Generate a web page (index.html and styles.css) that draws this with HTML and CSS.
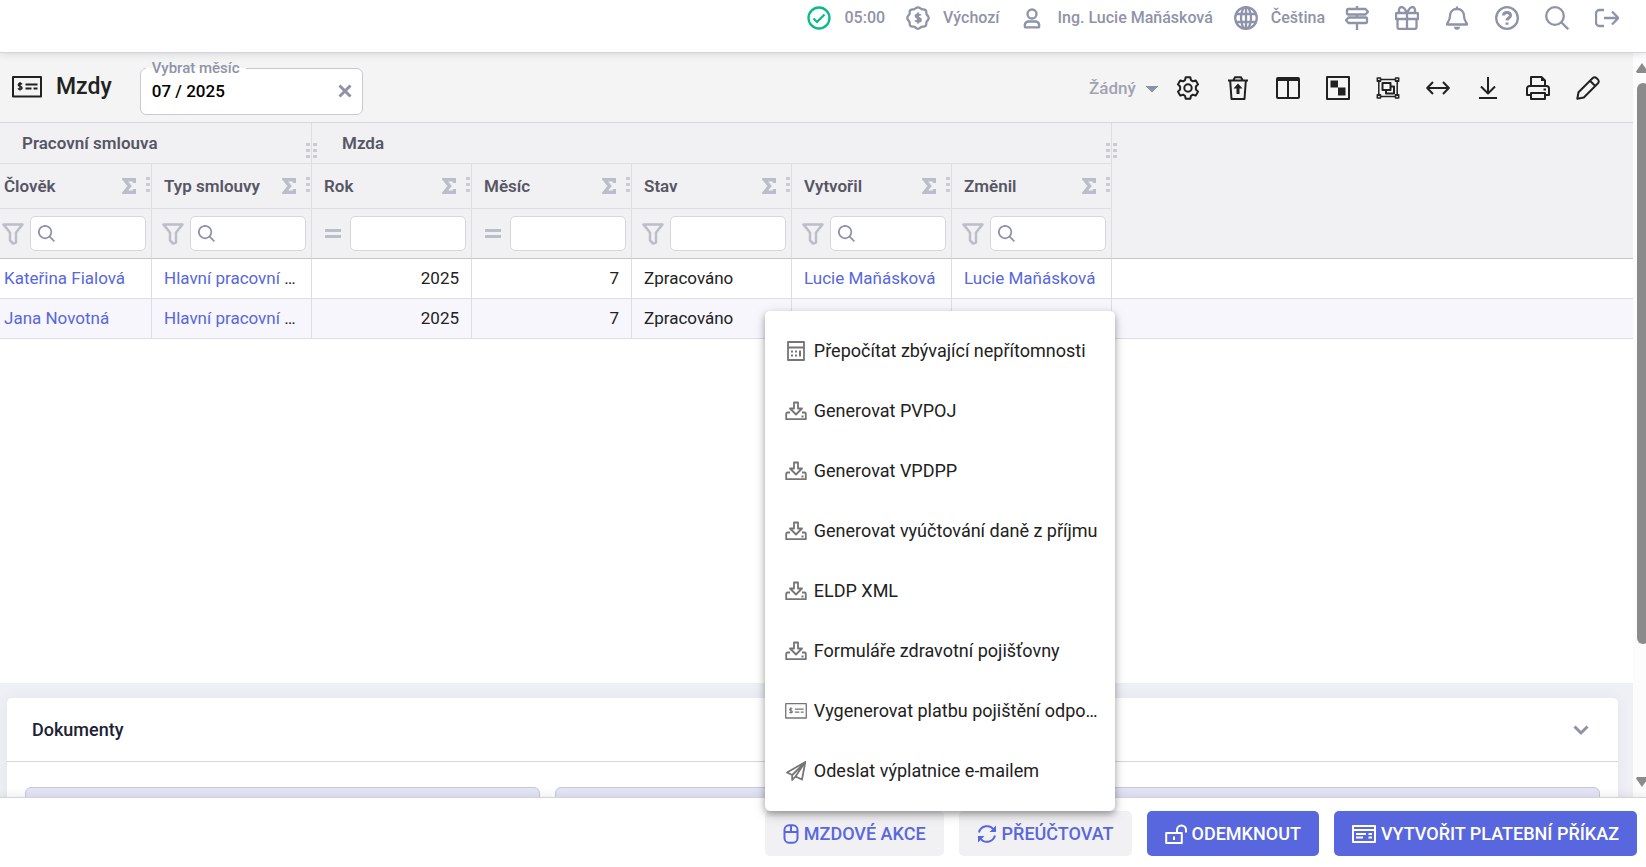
FILE: index.html
```html
<!DOCTYPE html>
<html lang="cs">
<head>
    <meta charset="UTF-8">
    <meta name="viewport" content="width=device-width, initial-scale=1.0">
    <title>Mzdy</title>
    <link rel="stylesheet" href="styles.css">
</head>
<body>

    <!-- Ikony -->
    <svg class="sprite" aria-hidden="true">
        <symbol id="i-check" viewBox="0 0 24 24"><circle cx="12" cy="12" r="10.5"/><path d="M6.5 12.5l3.5 3.5 7.500-7.500"/></symbol>
        <symbol id="i-badge" viewBox="0 0 24 24"><path d="M12 1.300c1.800 0 2.500 1.500 3.600 1.900s2.800-.3 4 .9.500 2.900.9 4 2.200 2 2.200 3.900-1.700 2.700-2.200 3.900.3 2.800-.9 4-2.900.5-4 .9-2 2-3.600 2-2.500-1.500-3.600-2-2.800.3-4-.9-.5-2.900-.9-4-2.200-2-2.200-3.900 1.700-2.700 2.200-3.900-.3-2.800.9-4 2.900-.5 4-.9 1.900-1.900 3.600-1.900z"/><path d="M14.500 9.500c-.3-1.200-4.800-1.500-4.800.6 0 2.200 5 1.500 5 3.800 0 2-4.700 2-5.200.3M12 6.500v11"/></symbol>
        <symbol id="i-user" viewBox="0 0 24 24"><circle cx="12" cy="8" r="4.500"/><path d="M4.800 20.500v-1.500a4 4 0 0 1 4-3.500h6.400a4 4 0 0 1 4 3.500v1.500a.8.8 0 0 1-.8.800H5.600a.8.800 0 0 1-.8-.8z"/></symbol>
        <symbol id="i-globe" viewBox="0 0 24 24"><circle cx="12" cy="12" r="10.800"/><ellipse cx="12" cy="12" rx="5" ry="10.800"/><path d="M12 1v22M2.500 8h19M2.500 16h19"/></symbol>
        <symbol id="i-sign" viewBox="0 0 24 24"><path d="M12 0v3M12 8.500v3M12 17v7M3 3h17.500l2.500 2.700-2.500 2.800H3a1 1 0 0 1-1-1V4a1 1 0 0 1 1-1zM21 11.500H3.500L1 14.200 3.500 17H21a1 1 0 0 0 1-1v-3.500a1 1 0 0 0-1-1z"/></symbol>
        <symbol id="i-gift" viewBox="0 0 24 24"><path d="M2 7h20a1 1 0 0 1 1 1v5H1V8a1 1 0 0 1 1-1zM2.500 13v8a2 2 0 0 0 2 2h15a2 2 0 0 0 2-2v-8M12 7v16M12 7C10 2.500 8.500 1 6.500 1S3.200 4 4.500 7M12 7c2-4.500 3.500-6 5.500-6s3.300 3 2 6"/></symbol>
        <symbol id="i-bell" viewBox="0 0 24 24"><path d="M12 3c-4.500 0-7 3-7 7 0 5-3 6-3 8.500h20c0-2.500-3-3.500-3-8.500 0-4-2.500-7-7-7zM12 .500v2"/><path class="solid" d="M9 20.800h6a3 3 0 0 1-6 0z"/></symbol>
        <symbol id="i-help" viewBox="0 0 24 24"><circle cx="12" cy="12" r="10.800"/><path class="thick" d="M8.500 9.500c.2-4 7-4 7 0 0 2.500-3.500 2.300-3.500 5M12 16.500v2.300"/></symbol>
        <symbol id="i-search" viewBox="0 0 24 24"><circle cx="10" cy="10" r="8.800"/><path d="M16.500 16.500l6.700 6.700"/></symbol>
        <symbol id="i-logout" viewBox="0 0 24 24"><path d="M9 4H4.500A3.500 3.500 0 0 0 1 7.500v9A3.500 3.500 0 0 0 4.500 20H9M9 12h14M17 5.500l6.300 6.500-6.300 6.500"/></symbol>
        <symbol id="i-check-card" viewBox="0 0 30 22"><path d="M1 1h28v19.500H1z"/><path class="thin" d="M10 8.300c-.6-1-3.700-1.200-3.700.6s3.700 1 3.700 3c0 1.800-3.300 1.900-3.900.4M8 6v8.500"/><path class="bar" d="M13.500 8.500h12M13.500 12.500h6M21.500 12.500h4"/></symbol>
        <symbol id="i-gear" viewBox="0 0 24 24"><path d="M9.700 1.200h4.600l.7 3 1.800 1.100 3-.9 2.300 4-2.200 2.100v3l2.200 2.100-2.300 4-3-.9-1.800 1.100-.7 3H9.700l-.7-3-1.800-1.100-3 .9-2.300-4 2.200-2.100v-3L1.900 8.400l2.300-4 3 .9L9 4.200z"/><circle cx="12" cy="12" r="3.700"/></symbol>
        <symbol id="i-trash" viewBox="0 0 24 24"><path d="M2 4.500h20M4.200 5l1.300 18h13l1.300-18M7.500 4l1.500-2.800h6L16.500 4"/><path class="solid" d="M12 7.500l4.500 5h-3V18h-3v-5.500h-3z"/></symbol>
        <symbol id="i-columns" viewBox="0 0 24 24"><rect x="1" y="2" width="22" height="20" rx="1"/><path d="M12 4v18"/><path class="solid" d="M1 2h22v3H1z"/></symbol>
        <symbol id="i-pivot" viewBox="0 0 24 24"><path d="M1 1h22v22H1z"/><path class="solid" d="M4.500 4.500h7.500v7h-7.500zM12 11.500h7.500v8H12z"/></symbol>
        <symbol id="i-group" viewBox="0 0 24 24"><path class="thin" d="M4 3.500h16M4 20.500h16M2.800 4v16M21.200 4v16M1.300 2h3.200v3.200H1.300zM19.500 2h3.200v3.200h-3.200zM1.300 18.800h3.200V22H1.300zM19.500 18.800h3.200V22h-3.200z"/><path d="M6.500 7h8v7h-8zM14.500 10.500H18V17.500h-8v-3.500"/></symbol>
        <symbol id="i-arrows" viewBox="0 0 24 24"><path d="M1.500 12h21M7 6l-5.800 6L7 18M17 6l5.800 6-5.800 6"/></symbol>
        <symbol id="i-download" viewBox="0 0 24 24"><path d="M12 1v16M5 10.500l7 7 7-7M3 22h18"/></symbol>
        <symbol id="i-print" viewBox="0 0 24 24"><path d="M5 11V1h10.500L19 4.500V11M5 19H1v-6.500A2.500 2.500 0 0 1 3.500 10h17a2.500 2.500 0 0 1 2.500 2.500V19h-4M5 17h14v6H5z"/><path class="solid" d="M15 1v4h4zM17.500 12.500h2.500v2h-2.500z"/></symbol>
        <symbol id="i-pencil" viewBox="0 0 24 24"><path d="M1.300 22.700l1.200-6.500L16.800 2a2.500 2.500 0 0 1 3.600 0L22 3.600a2.500 2.500 0 0 1 0 3.600L7.800 21.500zM14 4.800l5.200 5.200"/></symbol>
        <symbol id="i-close" viewBox="0 0 14 14"><path d="M1.500 1.500l11 11M12.500 1.500l-11 11"/></symbol>
        <symbol id="i-sigma" viewBox="0 0 14 16"><path d="M12.500 5V1.700H2.500L7.500 8l-5 6.300h10V11"/></symbol>
        <symbol id="i-funnel" viewBox="0 0 22 22"><path d="M1.500 1.500h19l-6.500 8v10l-3 1-3-3v-8z"/></symbol>
        <symbol id="i-equals" viewBox="0 0 22 22"><path class="thick" d="M3 7.500h16M3 13.500h16"/></symbol>
        <symbol id="i-calc" viewBox="1 2 22 20"><path d="M4 3h16v18H4zM4 8.500h16"/><path class="solid" d="M7 11.500h2v2H7zM11 11.500h2v2h-2zM7 15.500h2v2H7zM11 15.500h2v2h-2zM15 11.500h2v6h-2z"/></symbol>
        <symbol id="i-inbox" viewBox="0 0 22 20"><path d="M9 1.500h4v6h4l-6 6-6-6h4zM5 11.500H2.500a1.300 1.300 0 0 0-1.300 1.300v5.400h19.600v-5.400a1.300 1.300 0 0 0-1.300-1.300H17"/><path class="solid" d="M16.500 14.500h2v2h-2z"/></symbol>
        <symbol id="i-send" viewBox="0 0 22 20"><path d="M20.300 1L2 11.500l5.200 2.500v5l3.300-3.500 6.500 3zM20 1.500L7.200 14M19.500 2l-9 13.500"/></symbol>
        <symbol id="i-mouse" viewBox="0 0 16 20"><rect x="1.500" y="1.300" width="13" height="17.400" rx="4.500"/><path d="M1.500 8h13M8 1.500V8"/></symbol>
        <symbol id="i-refresh" viewBox="0 0 20 20"><path d="M2 8.500A8.300 8.300 0 0 1 17 6M18 11.500A8.300 8.300 0 0 1 3 14"/><path class="solid" d="M19 1.500v6.500h-6.500zM1 18.500V12h6.500z"/></symbol>
        <symbol id="i-unlock" viewBox="0 0 22 20"><path d="M1.200 9h15.600v10H1.200zM12 8.500V6a4.500 4.500 0 0 1 9 0v2.500M9 12.500v3.500"/></symbol>
        <symbol id="i-order" viewBox="0 0 24 18"><path d="M1 1h22v16H1zM1 5h22M4 9h10M4 12.500h7M16.500 9H20M16.500 12.500H20"/></symbol>
        <symbol id="i-chevron" viewBox="0 0 16 10"><path d="M1.500 1.500L8 8l6.500-6.500"/></symbol>
        <symbol id="i-grip1" viewBox="0 0 4 16"><path class="solid" d="M0 0h4v3H0zM0 6h4v3H0zM0 12h4v3H0z"/></symbol>
        <symbol id="i-grip2" viewBox="0 0 11 16"><path class="solid" d="M0 0h4v3H0zM7 0h4v3H7zM0 6h4v3H0zM7 6h4v3H7zM0 12h4v3H0zM7 12h4v3H7z"/></symbol>
    </svg>

    <!-- Horní lišta -->
    <header class="topbar">
        <span class="top-item ok"><svg class="icon"><use href="#i-check"/></svg></span>
        <span class="top-text">05:00</span>
        <a class="top-item" href="#"><svg class="icon"><use href="#i-badge"/></svg><span>Výchozí</span></a>
        <a class="top-item" href="#"><svg class="icon"><use href="#i-user"/></svg><span>Ing. Lucie Maňásková</span></a>
        <a class="top-item" href="#"><svg class="icon"><use href="#i-globe"/></svg><span>Čeština</span></a>
        <nav class="top-icons">
            <button type="button" aria-label="Průvodce"><svg class="icon"><use href="#i-sign"/></svg></button>
            <button type="button" aria-label="Novinky"><svg class="icon"><use href="#i-gift"/></svg></button>
            <button type="button" aria-label="Upozornění"><svg class="icon"><use href="#i-bell"/></svg></button>
            <button type="button" aria-label="Nápověda"><svg class="icon"><use href="#i-help"/></svg></button>
            <button type="button" aria-label="Hledat"><svg class="icon"><use href="#i-search"/></svg></button>
            <button type="button" aria-label="Odhlásit"><svg class="icon"><use href="#i-logout"/></svg></button>
        </nav>
    </header>

    <main class="content">
        <div class="scroll-area">

            <div class="toolbar">
                <div class="toolbar-left">
                    <svg class="icon title-icon"><use href="#i-check-card"/></svg>
                    <h1>Mzdy</h1>
                    <fieldset class="month-field">
                        <legend><label for="month">Vybrat měsíc</label></legend>
                        <div class="month-row">
                            <input type="text" id="month" value="07 / 2025">
                            <button type="button" aria-label="Vymazat"><svg class="icon"><use href="#i-close"/></svg></button>
                        </div>
                    </fieldset>
                </div>
                <div class="tools">
                    <select class="preset" aria-label="Pohled">
                        <option>Žádný</option>
                    </select>
                    <button type="button" aria-label="Nastavení"><svg class="icon"><use href="#i-gear"/></svg></button>
                    <button type="button" aria-label="Obnovit smazané"><svg class="icon"><use href="#i-trash"/></svg></button>
                    <button type="button" aria-label="Sloupce"><svg class="icon"><use href="#i-columns"/></svg></button>
                    <button type="button" aria-label="Kontingenční tabulka"><svg class="icon"><use href="#i-pivot"/></svg></button>
                    <button type="button" aria-label="Seskupit"><svg class="icon"><use href="#i-group"/></svg></button>
                    <button type="button" aria-label="Šířka"><svg class="icon"><use href="#i-arrows"/></svg></button>
                    <button type="button" aria-label="Stáhnout"><svg class="icon"><use href="#i-download"/></svg></button>
                    <button type="button" aria-label="Tisk"><svg class="icon"><use href="#i-print"/></svg></button>
                    <button type="button" aria-label="Upravit"><svg class="icon"><use href="#i-pencil"/></svg></button>
                </div>
            </div>

            <!-- Tabulka mezd -->
            <div class="grid">
                <table>
                    <colgroup>
                        <col class="col-first"><col class="col"><col class="col"><col class="col"><col class="col"><col class="col"><col class="col"><col>
                    </colgroup>
                    <thead>
                        <tr class="groups">
                            <th colspan="2">Pracovní smlouva<svg class="grip2"><use href="#i-grip2"/></svg></th>
                            <th colspan="5">Mzda<svg class="grip2"><use href="#i-grip2"/></svg></th>
                            <td class="filler" rowspan="3"></td>
                        </tr>
                        <tr class="names">
                            <th>Člověk<svg class="sigma"><use href="#i-sigma"/></svg><svg class="grip1"><use href="#i-grip1"/></svg></th>
                            <th>Typ smlouvy<svg class="sigma"><use href="#i-sigma"/></svg><svg class="grip1"><use href="#i-grip1"/></svg></th>
                            <th>Rok<svg class="sigma"><use href="#i-sigma"/></svg><svg class="grip1"><use href="#i-grip1"/></svg></th>
                            <th>Měsíc<svg class="sigma"><use href="#i-sigma"/></svg><svg class="grip1"><use href="#i-grip1"/></svg></th>
                            <th>Stav<svg class="sigma"><use href="#i-sigma"/></svg><svg class="grip1"><use href="#i-grip1"/></svg></th>
                            <th>Vytvořil<svg class="sigma"><use href="#i-sigma"/></svg><svg class="grip1"><use href="#i-grip1"/></svg></th>
                            <th>Změnil<svg class="sigma"><use href="#i-sigma"/></svg><svg class="grip1"><use href="#i-grip1"/></svg></th>
                        </tr>
                        <tr class="filters">
                            <td><div class="filter"><svg class="icon"><use href="#i-funnel"/></svg><span class="box"><svg class="icon"><use href="#i-search"/></svg><input type="text" aria-label="Člověk"></span></div></td>
                            <td><div class="filter"><svg class="icon"><use href="#i-funnel"/></svg><span class="box"><svg class="icon"><use href="#i-search"/></svg><input type="text" aria-label="Typ smlouvy"></span></div></td>
                            <td><div class="filter"><svg class="icon"><use href="#i-equals"/></svg><span class="box"><input type="text" aria-label="Rok"></span></div></td>
                            <td><div class="filter"><svg class="icon"><use href="#i-equals"/></svg><span class="box"><input type="text" aria-label="Měsíc"></span></div></td>
                            <td><div class="filter"><svg class="icon"><use href="#i-funnel"/></svg><span class="box"><input type="text" aria-label="Stav"></span></div></td>
                            <td><div class="filter"><svg class="icon"><use href="#i-funnel"/></svg><span class="box"><svg class="icon"><use href="#i-search"/></svg><input type="text" aria-label="Vytvořil"></span></div></td>
                            <td><div class="filter"><svg class="icon"><use href="#i-funnel"/></svg><span class="box"><svg class="icon"><use href="#i-search"/></svg><input type="text" aria-label="Změnil"></span></div></td>
                        </tr>
                    </thead>
                    <tbody>
                        <tr>
                            <td><a href="#">Kateřina Fialová</a></td>
                            <td><a href="#">Hlavní pracovní</a> …</td>
                            <td class="num">2025</td>
                            <td class="num">7</td>
                            <td>Zpracováno</td>
                            <td><a href="#">Lucie Maňásková</a></td>
                            <td><a href="#">Lucie Maňásková</a></td>
                            <td class="filler"></td>
                        </tr>
                        <tr>
                            <td><a href="#">Jana Novotná</a></td>
                            <td><a href="#">Hlavní pracovní</a> …</td>
                            <td class="num">2025</td>
                            <td class="num">7</td>
                            <td>Zpracováno</td>
                            <td></td>
                            <td></td>
                            <td class="filler"></td>
                        </tr>
                    </tbody>
                </table>
            </div>

            <!-- Dokumenty -->
            <section class="card">
                <div class="card-head">
                    <h2>Dokumenty</h2>
                    <button type="button" aria-label="Rozbalit"><svg class="icon"><use href="#i-chevron"/></svg></button>
                </div>
                <div class="card-body">
                    <div class="panel"></div>
                    <div class="panel wide"></div>
                </div>
            </section>
        </div>

        <div class="scrollbar">
            <svg class="arrow" viewBox="0 0 12 10"><path d="M6 0l6 8.500-1 1.500H1L0 8.500z"/></svg>
            <div class="track"><div class="thumb"></div></div>
            <svg class="arrow" viewBox="0 0 12 10"><path d="M6 10l6-8.500L11 0H1L0 1.500z"/></svg>
        </div>
    </main>

    <!-- Akce -->
    <footer class="actions">
        <div class="dropdown">
            <button type="button" class="btn"><svg class="icon mouse"><use href="#i-mouse"/></svg>MZDOVÉ AKCE</button>
            <div class="menu">
                <button type="button"><svg class="icon"><use href="#i-calc"/></svg><span>Přepočítat zbývající nepřítomnosti</span></button>
                <button type="button"><svg class="icon"><use href="#i-inbox"/></svg><span>Generovat PVPOJ</span></button>
                <button type="button"><svg class="icon"><use href="#i-inbox"/></svg><span>Generovat VPDPP</span></button>
                <button type="button"><svg class="icon"><use href="#i-inbox"/></svg><span>Generovat vyúčtování daně z příjmu</span></button>
                <button type="button"><svg class="icon"><use href="#i-inbox"/></svg><span>ELDP XML</span></button>
                <button type="button"><svg class="icon"><use href="#i-inbox"/></svg><span>Formuláře zdravotní pojišťovny</span></button>
                <button type="button"><svg class="icon"><use href="#i-check-card"/></svg><span>Vygenerovat platbu pojištění odpo…</span></button>
                <button type="button"><svg class="icon"><use href="#i-send"/></svg><span>Odeslat výplatnice e-mailem</span></button>
            </div>
        </div>
        <button type="button" class="btn"><svg class="icon"><use href="#i-refresh"/></svg>PŘEÚČTOVAT</button>
        <button type="button" class="btn primary"><svg class="icon lock"><use href="#i-unlock"/></svg>ODEMKNOUT</button>
        <button type="button" class="btn primary"><svg class="icon order"><use href="#i-order"/></svg>VYTVOŘIT PLATEBNÍ PŘÍKAZ</button>
    </footer>

</body>
</html>
```
FILE: styles.css
```css
* {
    box-sizing: border-box;
}
body {
    margin: 0;
    height: 100vh;
    display: flex;
    flex-direction: column;
    overflow: hidden;
    background: #fff;
    color: #212121;
    font-family: Roboto, "Liberation Sans", sans-serif;
    font-size: 17px;
    line-height: 20px;
}
button {
    padding: 0;
    border: none;
    background: none;
    color: inherit;
    font: inherit;
    cursor: pointer;
}
a {
    color: #5867dd;
    text-decoration: none;
}
.sprite {
    position: absolute;
    width: 0;
    height: 0;
}
.icon {
    width: 24px;
    height: 24px;
    flex: none;
    display: block;
    fill: none;
    stroke: currentColor;
    stroke-width: 2;
    stroke-linejoin: round;
}
.solid {
    fill: currentColor;
    stroke: none;
}
.thick {
    stroke-width: 3;
}
.thin {
    stroke-width: 1.5;
}

/* horní lišta */
.topbar {
    flex: none;
    height: 53px;
    padding: 0 27px 17px 0;
    display: flex;
    align-items: center;
    justify-content: flex-end;
    border-bottom: 1px solid #d3d4dd;
    box-shadow: 0 1px 8px rgba(0, 0, 0, 0.12);
    position: relative;
    color: #8f93a9;
    font-size: 16px;
    font-weight: 500;
}
.topbar .icon {
    stroke-width: 2.3;
}
.top-item {
    display: flex;
    align-items: center;
    gap: 13px;
    margin-left: 21px;
    color: inherit;
}
.top-text {
    margin-left: 13px;
}
.ok {
    color: #0abb87;
}
.top-icons {
    display: flex;
    gap: 26px;
    margin-left: 20px;
}

/* obsah s posuvníkem */
.content {
    flex: 1;
    min-height: 0;
    display: flex;
}
.scroll-area {
    flex: 1;
    min-width: 0;
    overflow: hidden;
    background: #eff0f6;
}
.scrollbar {
    width: 13px;
    padding: 10px 0;
    display: flex;
    flex-direction: column;
    gap: 10px;
    overflow: hidden;
    background: #fcfcfc;
}
.arrow {
    width: 12px;
    height: 10px;
    margin-left: 3px;
    flex: none;
    fill: #8b8b8b;
}
.track {
    flex: 1;
    padding-left: 4px;
}
.thumb {
    width: 12px;
    height: 82%;
    border-radius: 6px;
    background: #8b8b8b;
}

/* nástroje */
.toolbar {
    height: 70px;
    padding: 0 20px 0 12px;
    display: flex;
    align-items: center;
    background: #f4f4f4;
    border-bottom: 1px solid #d5d5dc;
}
.toolbar-left {
    padding-bottom: 1px;
    display: flex;
    align-items: center;
}
.title-icon {
    width: 30px;
    height: 22px;
}
h1 {
    margin: 0 28px 0 14px;
    font-size: 23px;
    line-height: 28px;
    font-weight: 500;
}
.month-field {
    width: 223px;
    height: 56px;
    margin: 0;
    padding: 0 10px 0 5px;
    border: 1px solid #c6c8d4;
    border-radius: 6px;
    background: #fff;
}
.month-field legend {
    padding: 0 6px;
    color: #8f93a9;
    font-size: 15px;
    line-height: 18px;
    font-weight: 500;
}
.month-row {
    display: flex;
    align-items: center;
    justify-content: space-between;
    height: 28px;
    padding-left: 6px;
}
.month-row input {
    width: 150px;
    padding: 0;
    border: none;
    outline: none;
    background: none;
    color: #000;
    font: inherit;
    font-weight: 500;
}
.month-row .icon {
    width: 14px;
    height: 14px;
    color: #8f93a9;
    stroke-width: 3;
}
.tools {
    margin-left: auto;
    display: flex;
    align-items: center;
}
.tools button {
    width: 50px;
    height: 50px;
    display: flex;
    align-items: center;
    justify-content: center;
}
.preset {
    appearance: none;
    width: 70px;
    margin-right: 4px;
    padding: 0;
    border: none;
    color: #a0a3b3;
    font: inherit;
    font-weight: 500;
    background: linear-gradient(to bottom right, #8f93a9 50%, transparent 52%) 63px 8px / 6px 6px no-repeat,
        linear-gradient(to bottom left, #8f93a9 50%, transparent 52%) 57px 8px / 6px 6px no-repeat;
}

/* tabulka */
.grid {
    height: 560px;
    background: #fff;
}
table {
    width: 100%;
    table-layout: fixed;
    border-collapse: separate;
    border-spacing: 0;
}
.col-first {
    width: 152px;
}
.col {
    width: 160px;
}
th, td {
    position: relative;
    padding: 0 12px;
    border-right: 1px solid #dedee2;
    border-bottom: 1px solid #dedee2;
    text-align: left;
    white-space: nowrap;
}
tr > :first-child {
    padding-left: 4px;
}
thead {
    background: #f1f1f4;
    color: #575664;
}
th {
    font-weight: 600;
}
.groups {
    height: 41px;
}
.groups th {
    padding-left: 30px;
}
.groups th:first-child {
    padding-left: 22px;
}
.names {
    height: 45px;
}
.filters {
    height: 50px;
}
.filters td {
    padding: 0 5px 0 10px;
}
.filters td:first-child {
    padding-left: 2px;
}
.filters td, thead .filler {
    border-bottom-color: #c4c4ca;
}
.filler {
    border-right: none;
}
.sigma {
    position: absolute;
    top: 14px;
    right: 15px;
    width: 14px;
    height: 16px;
    fill: none;
    stroke: #bbbdc9;
    stroke-width: 3.5;
}
.grip1, .grip2 {
    position: absolute;
    color: #cbcbd0;
}
.grip1 {
    top: 13px;
    right: 1px;
    width: 4px;
    height: 16px;
}
.grip2 {
    z-index: 1;
    top: 20px;
    right: -6px;
    width: 11px;
    height: 16px;
}
.filter {
    display: flex;
    align-items: center;
    gap: 6px;
}
.filter > .icon {
    width: 22px;
    height: 22px;
    color: #bbbdc9;
    stroke-width: 2.5;
}
.box {
    flex: 1;
    min-width: 0;
    height: 35px;
    padding: 0 7px;
    display: flex;
    align-items: center;
    border: 1px solid #d6d7de;
    border-radius: 5px;
    background: #fff;
}
.box .icon {
    width: 17px;
    height: 17px;
    color: #8f93a9;
    stroke-width: 2.5;
}
.box input {
    flex: 1;
    min-width: 0;
    border: none;
    outline: none;
    background: none;
    font: inherit;
}
tbody tr {
    height: 40px;
}
tbody td {
    padding-bottom: 2px;
}
tbody tr:nth-child(even) {
    background: #f6f6fc;
}
.num {
    text-align: right;
}

/* dokumenty */
.card {
    margin: 15px 15px 0 7px;
    border-radius: 5px;
    background: #fff;
    box-shadow: 0 0 13px rgba(82, 63, 105, 0.07);
}
.card-head {
    height: 64px;
    padding: 0 29px 0 25px;
    display: flex;
    align-items: center;
    justify-content: space-between;
    border-bottom: 1px solid #d6d6da;
}
.card-head .icon {
    width: 16px;
    height: 10px;
    color: #8f93a9;
    stroke-width: 3;
}
h2 {
    margin: 0;
    color: #212134;
    font-size: 18px;
    line-height: 22px;
    font-weight: 500;
}
.card-body {
    padding: 25px 18px;
    display: grid;
    grid-template-columns: repeat(3, 1fr);
    gap: 15px;
}
.panel {
    height: 60px;
    border: 1px solid #c9c9d6;
    border-radius: 6px;
    background: #e3e4f8;
}
.panel.wide {
    grid-column: span 2;
}

/* spodní lišta */
.actions {
    flex: none;
    position: relative;
    height: 70px;
    padding: 13px 9px 0;
    display: flex;
    align-items: flex-start;
    justify-content: flex-end;
    gap: 15px;
    background: #fff;
    border-top: 1px solid #d3d3d8;
    box-shadow: 0 0 10px rgba(0, 0, 0, 0.1);
}
.btn {
    height: 45px;
    padding: 0 18px;
    display: flex;
    align-items: center;
    gap: 5px;
    border-radius: 5px;
    background: #f1f1f4;
    color: #5867dd;
    font-size: 18px;
    font-weight: 500;
}
.btn .icon {
    width: 20px;
    height: 20px;
}
.btn .mouse {
    width: 16px;
}
.btn .lock {
    width: 22px;
}
.btn .order {
    width: 24px;
}
.btn.primary {
    background: #5867dd;
    color: #fff;
}
.dropdown {
    position: relative;
}
.menu {
    position: absolute;
    left: 0;
    bottom: 45px;
    width: 350px;
    padding: 10px 0;
    border-radius: 5px;
    background: #fff;
    box-shadow: 0 3px 6px rgba(0, 0, 0, 0.3), 0 4px 14px rgba(0, 0, 0, 0.14);
}
.menu button {
    width: 100%;
    height: 60px;
    padding: 0 0 0 20px;
    display: flex;
    align-items: center;
    gap: 7px;
    font-size: 18px;
    text-align: left;
    white-space: nowrap;
}
.menu .icon {
    width: 22px;
    height: 20px;
    color: #757575;
    stroke-width: 1.8;
}
```
